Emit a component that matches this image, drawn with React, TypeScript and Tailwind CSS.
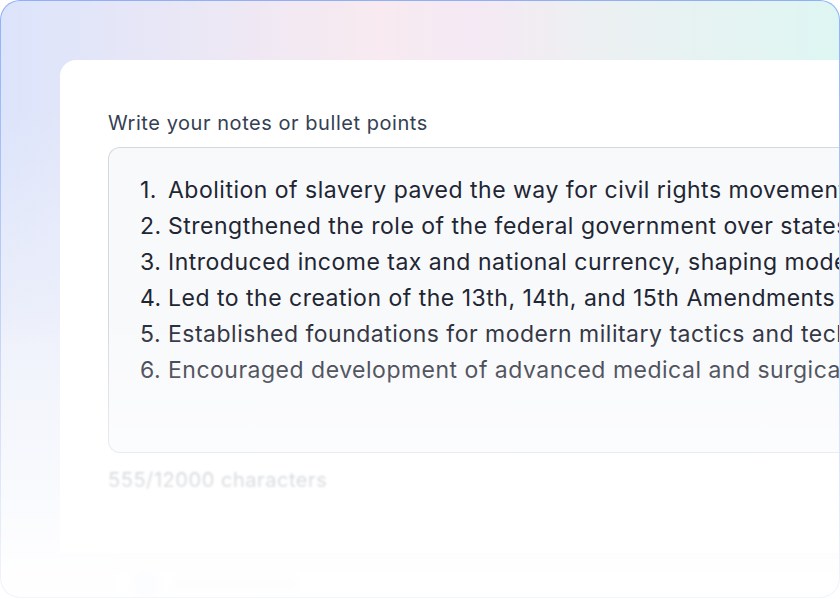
import React from "react";

const items = [
  "Abolition of slavery paved the way for civil rights movements",
  "Strengthened the role of the federal government over states",
  "Introduced income tax and national currency, shaping modern finance",
  "Led to the creation of the 13th, 14th, and 15th Amendments",
  "Established foundations for modern military tactics and technology",
  "Encouraged development of advanced medical and surgical practices",
];

export default function App() {
  return (
    <div
      className="w-[840px] h-[599px] bg-white"
      style={{ fontFamily: "Inter, 'Noto Sans', sans-serif" }}
    >
      <div className="w-full h-[598px] rounded-[20px] p-px bg-linear-to-b from-[#8fb0f8] via-[#b9ccf9] via-[45%] to-[#f3f5fd]">
        <div className="relative w-full h-full rounded-[19px] overflow-hidden bg-linear-to-r from-[#dce4fb] via-[#f8eaf0] via-[45%] to-[#def6f3]">
          <div className="absolute inset-0 bg-linear-to-r from-transparent from-[45%] via-[#f5e6f6] via-[55%] to-transparent to-[70%] opacity-60" />
          <div className="absolute inset-0 bg-linear-to-b from-transparent from-[18%] to-[#eef1fb] to-[60%]" />
          <div className="relative pt-[59px] pl-[59px]">
            <div className="h-[493px] bg-white rounded-tl-[16px] pt-[49px] pl-[48px] flex flex-col">
              <div className="text-[20px] leading-[28px] tracking-[0.55px] text-[#344054] whitespace-nowrap">
                Write your notes or bullet points
              </div>
              <div className="mt-[10px] h-[306px] bg-[#f8f9fb] border border-[#d5d8de] border-r-0 rounded-l-[12px] pt-[24px] pl-[31px] overflow-hidden">
                {items.map((t, i) => (
                  <div
                    key={i}
                    className="text-[23px] leading-[36px] tracking-[0.5px] text-[#1f2633] whitespace-nowrap"
                  >
                    <span className="inline-block w-[28px]">{i + 1}.</span>
                    {t}
                  </div>
                ))}
              </div>
              <div className="mt-[13px] text-[20px] leading-[28px] tracking-[0.55px] text-[#9ca3af] blur-[1px] whitespace-nowrap">
                555/12000 characters
              </div>
            </div>
            <div className="ml-[48px] mt-[5px] h-[60px] rounded-tl-[12px] border border-[#dfe3f5] border-r-0 bg-[#f4f6fc] blur-[2px] flex items-start pt-[12px] pl-[24px] gap-[16px]">
              <div className="w-[26px] h-[26px] rounded-full bg-[#c7d2fe]" />
              <div className="mt-[8px] w-[120px] h-[10px] rounded bg-[#d1d5db]" />
            </div>
          </div>
          <div className="absolute inset-0 pointer-events-none bg-linear-to-b from-transparent from-[52%] to-white/95 to-[96%]" />
        </div>
      </div>
    </div>
  );
}
